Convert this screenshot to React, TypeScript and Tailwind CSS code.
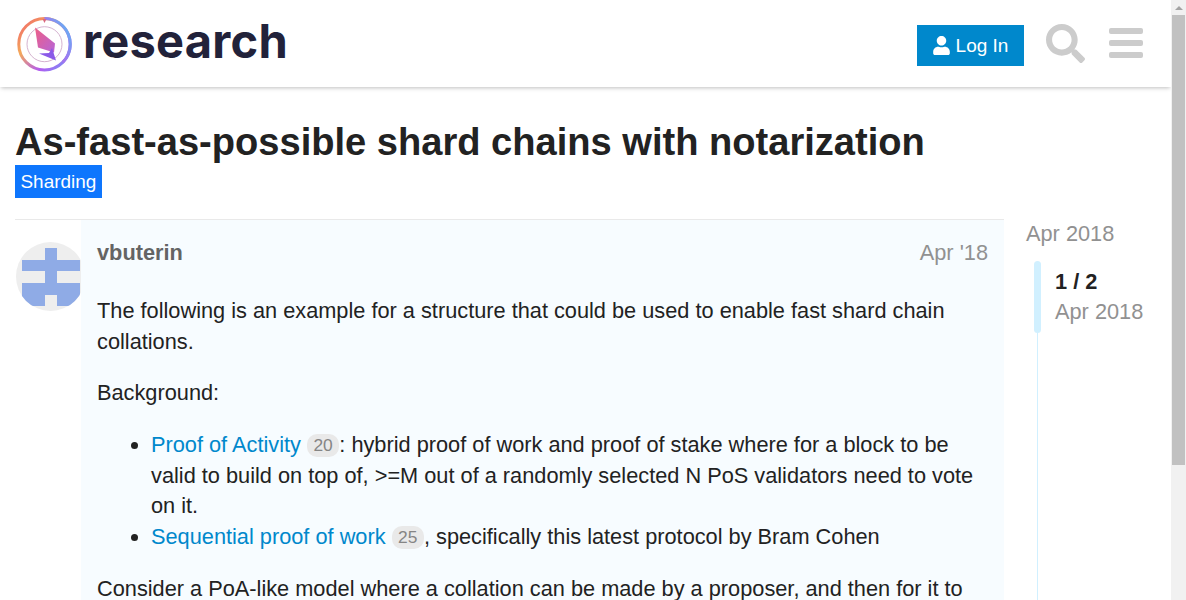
import React from "react";

function Logo() {
  return (
    <svg width="56" height="56" viewBox="0 0 56 56" className="shrink-0">
      <defs>
        <linearGradient id="ring" x1="0" y1="0" x2="1" y2="1">
          <stop offset="0" stopColor="#f0616d" />
          <stop offset="0.35" stopColor="#f4a95a" />
          <stop offset="0.7" stopColor="#b25cf0" />
          <stop offset="1" stopColor="#6a9cf5" />
        </linearGradient>
        <linearGradient id="ringB" x1="1" y1="0" x2="0" y2="1">
          <stop offset="0" stopColor="#4fc3f5" />
          <stop offset="0.5" stopColor="#9b7cf0" />
          <stop offset="1" stopColor="#b95ce8" />
        </linearGradient>
        <linearGradient id="gem" x1="0" y1="0" x2="1" y2="1">
          <stop offset="0" stopColor="#ee5f86" />
          <stop offset="1" stopColor="#b765d8" />
        </linearGradient>
      </defs>
      <circle cx="28.500" cy="28.200" r="25.700" fill="none" stroke="url(#ring)" strokeWidth="3" />
      <path d="M28.500 2.500A25.700 25.700 0 0 1 46.700 46.400" fill="none" stroke="url(#ringB)" strokeWidth="3" />
      <path d="M26.500 3l4 0-2 4z" fill="#d9687f" />
      <circle cx="28.500" cy="28.200" r="17.500" fill="none" stroke="#cfa9c9" strokeWidth="0.9" />
      <path d="M19 11.500L39 27.500 38 36.500 22 31.500Z" fill="url(#gem)" />
      <path d="M23 37.500L33 37 36 32 40 44.500Z" fill="#8b5ae8" />
    </svg>
  );
}

function Cite({ n }: { n: number }) {
  return (
    <span className="inline-block rounded-[10px] bg-[#e9e9e9] px-[6.5px] text-[17.4px] leading-[23px] text-[#858585] align-[1px]">
      {n}
    </span>
  );
}

export default function App() {
  return (
    <div className="flex h-[600px] w-[1186px] overflow-hidden bg-white text-[#222222] [font-family:'Liberation_Sans',Arial,sans-serif]">
      <div className="flex w-[1171px] shrink-0 flex-col">
        <header className="flex h-[87px] shrink-0 items-center justify-between bg-white pl-[16px] pr-[28px] shadow-[0_2px_4px_-1px_rgba(0,0,0,0.25)]">
          <div className="flex items-center gap-[11px]">
            <Logo />
            <span className="-mt-[6px] text-[47px] font-bold leading-none tracking-[0.25px] text-[#22223a] [font-family:Inter,sans-serif]">
              research
            </span>
          </div>
          <div className="flex items-center">
            <button className="mt-[4px] flex h-[41px] w-[107px] items-center justify-center gap-[6px] bg-[#0088cc] text-[19px] text-white">
              <svg width="17" height="19" viewBox="0 0 448 512" fill="currentColor">
                <path d="M224 256c70.700 0 128-57.300 128-128S294.700 0 224 0 96 57.300 96 128s57.300 128 128 128zm89.600 32h-16.700c-22.200 10.200-46.900 16-72.900 16s-50.600-5.800-72.900-16h-16.700C60.200 288 0 348.200 0 422.400V464c0 26.500 21.500 48 48 48h352c26.500 0 48-21.500 48-48v-41.600c0-74.200-60.200-134.400-134.400-134.400z" />
              </svg>
              <span className="pt-[1px]">Log In</span>
            </button>
            <svg className="ml-[22px]" width="39" height="39" viewBox="0 0 512 512" fill="#cccccc">
              <path d="M505 442.700L405.300 343c-4.500-4.500-10.600-7-17-7H372c27.600-35.300 44-79.700 44-128C416 93.100 322.900 0 208 0S0 93.100 0 208s93.100 208 208 208c48.300 0 92.700-16.400 128-44v16.300c0 6.400 2.500 12.500 7 17l99.700 99.700c9.400 9.400 24.600 9.400 33.900 0l28.300-28.300c9.400-9.400 9.400-24.600.1-34zM208 336c-70.700 0-128-57.200-128-128 0-70.700 57.200-128 128-128 70.700 0 128 57.200 128 128 0 70.700-57.200 128-128 128z" />
            </svg>
            <div className="mb-[1px] ml-[24px] flex w-[34px] flex-col gap-[6px]">
              <div className="h-[6px] rounded-[2px] bg-[#cccccc]" />
              <div className="h-[6px] rounded-[2px] bg-[#cccccc]" />
              <div className="h-[6px] rounded-[2px] bg-[#cccccc]" />
            </div>
          </div>
        </header>

        <main className="min-h-0 flex-1 overflow-hidden pl-[15px]">
          <h1 className="mt-[32px] text-[38.08px] font-bold leading-[46px] text-[#222222]">
            As-fast-as-possible shard chains with notarization
          </h1>
          <div>
            <span className="inline-block bg-[#0e76fd] px-[5.5px] text-[18.93px] leading-[33px] text-white">Sharding</span>
          </div>
          <div className="mt-[21px] flex">
            <div className="w-[989px] shrink-0 border-t border-[#e9e9e9]">
              <div className="flex">
                <div className="w-[66px] shrink-0 pl-[1px] pt-[22px]">
                  <svg width="69" height="69" viewBox="0 0 69 69" className="rounded-full">
                    <rect width="69" height="69" fill="#eeeeee" />
                    <path d="M29 6h12v12h23v11H41v12h23v23H41V53H29v11H6V41h23V29H6V18h23z" fill="#8fabe6" />
                  </svg>
                </div>
                <div className="min-w-0 flex-1 bg-[#f7fcff] pl-[16px] pr-[16px] text-[21.76px] leading-[30.46px]">
                  <div className="flex items-baseline justify-between pt-[18px]">
                    <span className="font-bold text-[#646464]">vbuterin</span>
                    <span className="text-[#919191]">Apr '18</span>
                  </div>
                  <p className="mt-[28px]">
                    The following is an example for a structure that could be used to enable fast shard chain collations.
                  </p>
                  <p className="mt-[20.76px]">Background:</p>
                  <ul className="mt-[21.76px] list-disc pl-[54px]">
                    <li>
                      <span className="text-[#0088cc]">Proof of Activity</span> <Cite n={20} />: hybrid proof of work and proof of stake where for a block to be valid to build on top of, &gt;=M out of a randomly selected N PoS validators need to vote on it.
                    </li>
                    <li>
                      <span className="text-[#0088cc]">Sequential proof of work</span> <Cite n={25} />, specifically this latest protocol by Bram Cohen
                    </li>
                  </ul>
                  <p className="mt-[21.76px]">
                    Consider a PoA-like model where a collation can be made by a proposer, and then for it to
                  </p>
                </div>
              </div>
            </div>
            <aside className="ml-[22px] min-w-0 flex-1 text-[21.76px] leading-[30px] text-[#919191]">
              <div>Apr 2018</div>
              <div className="mt-[12px] flex">
                <div className="relative ml-[8px] w-[7px] shrink-0">
                  <div className="h-[72px] rounded-[4px] bg-[#d1f0ff]" />
                  <div className="absolute left-[3px] top-[72px] h-[400px] w-px bg-[#d1f0ff]" />
                </div>
                <div className="ml-[14px] pt-[6px]">
                  <div className="font-bold text-[#222222]">1 / 2</div>
                  <div>Apr 2018</div>
                </div>
              </div>
            </aside>
          </div>
        </main>
      </div>

      <div className="flex h-[600px] w-[15px] shrink-0 flex-col bg-[#f1f1f1]">
        <div className="flex h-[15px] items-center justify-center">
          <div className="h-0 w-0 border-x-[4px] border-b-[4px] border-x-transparent border-b-[#a3a3a3]" />
        </div>
        <div className="mx-auto h-[450px] w-[13px] bg-[#c1c1c1]" />
      </div>
    </div>
  );
}
